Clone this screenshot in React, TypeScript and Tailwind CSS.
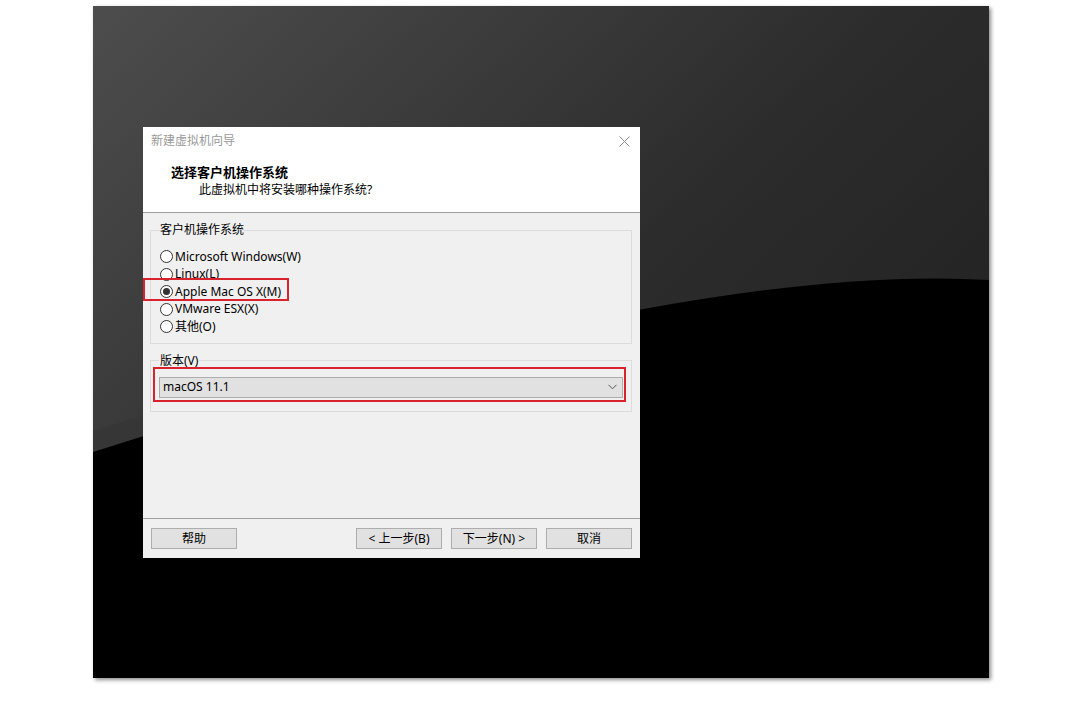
import React from "react";

const osOptions = [
  { id: "win", label: "Microsoft Windows(W)" },
  { id: "linux", label: "Linux(L)" },
  { id: "mac", label: "Apple Mac OS X(M)" },
  { id: "esx", label: "VMware ESX(X)" },
  { id: "other", label: "其他(O)" },
];

const Radio: React.FC<{ checked?: boolean; label: string }> = ({ checked, label }) => (
  <div className="flex h-[17.5px] items-center gap-[2px]">
    <span className="flex h-[13px] w-[13px] items-center justify-center rounded-full border border-[#333] bg-white">
      {checked && <span className="h-[7px] w-[7px] rounded-full bg-[#333]" />}
    </span>
    <span className="text-[12px] leading-none text-black">{label}</span>
  </div>
);

const WizButton: React.FC<{ children: React.ReactNode }> = ({ children }) => (
  <button className="h-[21px] w-[86px] border border-[#adadad] bg-[#e1e1e1] text-[12px] leading-none text-black">
    {children}
  </button>
);

const Wallpaper: React.FC = () => (
  <svg className="absolute inset-0" width="896" height="672" viewBox="0 0 896 672">
    <defs>
      <linearGradient id="wp" x1="0" y1="0" x2="1" y2="0.8">
        <stop offset="0" stopColor="#4d4d4d" />
        <stop offset="0.55" stopColor="#2c2c2c" />
        <stop offset="1" stopColor="#1f1f1f" />
      </linearGradient>
      <linearGradient id="hl" x1="0" y1="0" x2="0" y2="1">
        <stop offset="0" stopColor="#2a2a2a" stopOpacity="0" />
        <stop offset="1" stopColor="#333" stopOpacity="0.5" />
      </linearGradient>
    </defs>
    <rect width="896" height="672" fill="url(#wp)" />
    <path d="M0 425 Q 600 236 896 254 L896 274 Q 600 256 0 446 Z" fill="url(#hl)" />
    <path d="M0 446 Q 600 256 896 274 L896 672 L0 672 Z" fill="#000" />
  </svg>
);

export default function App() {
  return (
    <div
      className="min-h-[708px] w-full bg-white pl-[93px] pt-[6px]"
      style={{ fontFamily: '"Noto Sans", "Noto Sans CJK SC", sans-serif' }}
    >
      <div className="relative h-[672px] w-[896px] overflow-hidden pl-[50px] pt-[121px] shadow-[2px_2px_4px_rgba(0,0,0,0.45)]">
        <Wallpaper />

        {/* dialog */}
        <div className="relative flex h-[431px] w-[497px] flex-col bg-[#f0f0f0]">
          <div className="border-b border-[#a0a0a0] bg-white pb-[14px]">
            <div className="flex h-[28px] items-center justify-between pl-[8px] pr-[10px]">
              <span className="text-[12px] text-[#999]">新建虚拟机向导</span>
              <svg width="11" height="11" viewBox="0 0 11 11">
                <path d="M0.5 0.5 L10.5 10.5 M10.5 0.5 L0.5 10.5" stroke="#8a8a8a" strokeWidth="1" />
              </svg>
            </div>
            <div className="mt-[8px] pl-[28px] text-[13px] font-bold leading-[18px] text-black">
              选择客户机操作系统
            </div>
            <div className="mt-[1px] pl-[56px] text-[12px] leading-[16px] text-black">
              此虚拟机中将安装哪种操作系统?
            </div>
          </div>

          <div className="flex flex-1 flex-col pl-[7px] pr-[8px] pt-[9px]">
            <fieldset className="border border-[#dcdcdc] pb-[7px] pl-[9px]">
              <legend className="px-[0px] text-[12px] leading-[16px] text-black">客户机操作系统</legend>
              <div className="flex flex-col pt-[10px]">
                {osOptions.map((o) => (
                  <Radio key={o.id} label={o.label} checked={o.id === "mac"} />
                ))}
              </div>
            </fieldset>

            <fieldset className="mt-[9px] border border-[#dcdcdc] px-[8px] pb-[13px]">
              <legend className="px-[1px] text-[12px] leading-[16px] text-black">版本(V)</legend>
              <div className="mt-[8px] flex h-[21px] items-center justify-between border border-[#adadad] bg-[#e1e1e1] pl-[3px] pr-[5px]">
                <span className="text-[12px] leading-none text-black">macOS 11.1</span>
                <svg width="9" height="6" viewBox="0 0 9 6">
                  <path d="M0.5 0.8 L4.5 4.8 L8.5 0.8" fill="none" stroke="#555" strokeWidth="1" />
                </svg>
              </div>
            </fieldset>
          </div>

          <div className="flex h-[40px] items-start border-t border-[#a0a0a0] px-[8px] pt-[9px]">
            <WizButton>帮助</WizButton>
            <div className="flex-1" />
            <div className="flex gap-[9px]">
              <WizButton>&lt; 上一步(B)</WizButton>
              <WizButton>下一步(N) &gt;</WizButton>
              <WizButton>取消</WizButton>
            </div>
          </div>

          {/* annotation boxes */}
          <div className="absolute left-0 top-[151px] h-[23px] w-[146px] border-2 border-[#d8232f]" />
          <div className="absolute left-[10px] top-[240px] h-[35px] w-[473px] border-2 border-[#d8232f]" />
        </div>
      </div>
    </div>
  );
}
